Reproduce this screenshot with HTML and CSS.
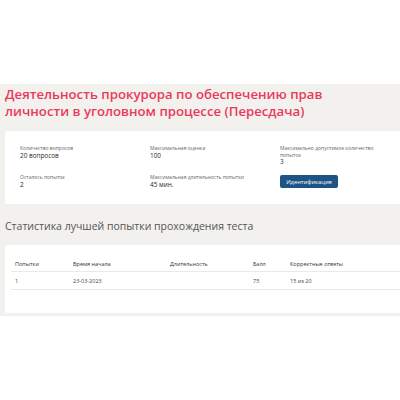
FILE: index.html
```html
<!DOCTYPE html>
<html lang="ru">
<head>
<meta charset="utf-8">
<link rel="stylesheet" href="styles.css">
</head>
<body>
<div class="top"></div>
<main class="page">
  <h1 class="title">Деятельность прокурора по обеспечению прав<br>личности в уголовном процессе (Пересдача)</h1>
  <section class="card info">
    <div class="cell"><div class="label">Количество вопросов</div><div class="value">20 вопросов</div></div>
    <div class="cell"><div class="label">Максимальная оценка</div><div class="value">100</div></div>
    <div class="cell"><div class="label">Максимально допустимое количество<br>попыток</div><div class="value">3</div></div>
    <div class="cell"><div class="label">Осталось попыток</div><div class="value">2</div></div>
    <div class="cell"><div class="label">Максимальная длительность попытки</div><div class="value">45 мин.</div></div>
    <div class="cell"><button class="btn">Идентификация</button></div>
  </section>
  <h2 class="subtitle">Статистика лучшей попытки прохождения теста</h2>
  <section class="card tablecard">
    <table class="stats">
      <thead>
        <tr><th class="c1">Попытки</th><th class="c2">Время начала</th><th class="c3">Длительность</th><th class="c4">Балл</th><th class="c5">Корректные ответы</th></tr>
      </thead>
      <tbody>
        <tr><td>1</td><td>23-03-2023</td><td></td><td>75</td><td>15 из 20</td></tr>
      </tbody>
    </table>
  </section>
</main>
</body>
</html>
```
FILE: styles.css
```css
html, body {
  margin: 0;
  padding: 0;
  background: #ffffff;
  font-family: "Open Sans", "Liberation Sans", sans-serif;
}
.top {
  height: 84px;
}
.page {
  background: #f2f1ee;
  padding: 0 0 3px 5px;
  overflow: hidden;
}
.title {
  margin: 0;
  padding-top: 2px;
  font-size: 13.2px;
  line-height: 17px;
  font-weight: 600;
  color: #ea3a5c;
}
.card {
  background: #ffffff;
  margin-right: -10px;
  border-radius: 2px;
}
.info {
  margin-top: 11px;
  display: grid;
  grid-template-columns: 130px 130px 1fr;
  padding: 14px 0 14px 15px;
  height: 45px;
  align-content: start;
}
.cell {
  height: 29px;
}
.label {
  font-size: 5px;
  line-height: 6.5px;
  color: #666666;
}
.value {
  font-size: 6.4px;
  line-height: 7.5px;
  color: #2a2a2a;
}
.btn {
  display: block;
  margin-top: 1px;
  background: #1e5385;
  color: #ffffff;
  border: none;
  border-radius: 2px;
  font-family: inherit;
  font-size: 5.8px;
  padding: 0;
  height: 13px;
  width: 58px;
}
.subtitle {
  margin: 0;
  padding-top: 14px;
  height: 27px;
  font-size: 10.5px;
  line-height: 16px;
  font-weight: 400;
  color: #555555;
}
.tablecard {
  padding: 12px 0 23px 6px;
}
.stats {
  border-collapse: collapse;
  width: 400px;
  font-size: 5.5px;
  color: #444444;
}
.stats th {
  text-align: left;
  font-weight: 400;
  color: #333333;
  height: 14px;
  padding: 0 0 0 4px;
  border-bottom: 1px solid #ebeae7;
}
.stats td {
  height: 17px;
  padding: 0 0 0 4px;
  border-bottom: 1px solid #ebeae7;
}
.c1 { width: 54px; }
.c2 { width: 93px; }
.c3 { width: 79px; }
.c4 { width: 33px; }
```
